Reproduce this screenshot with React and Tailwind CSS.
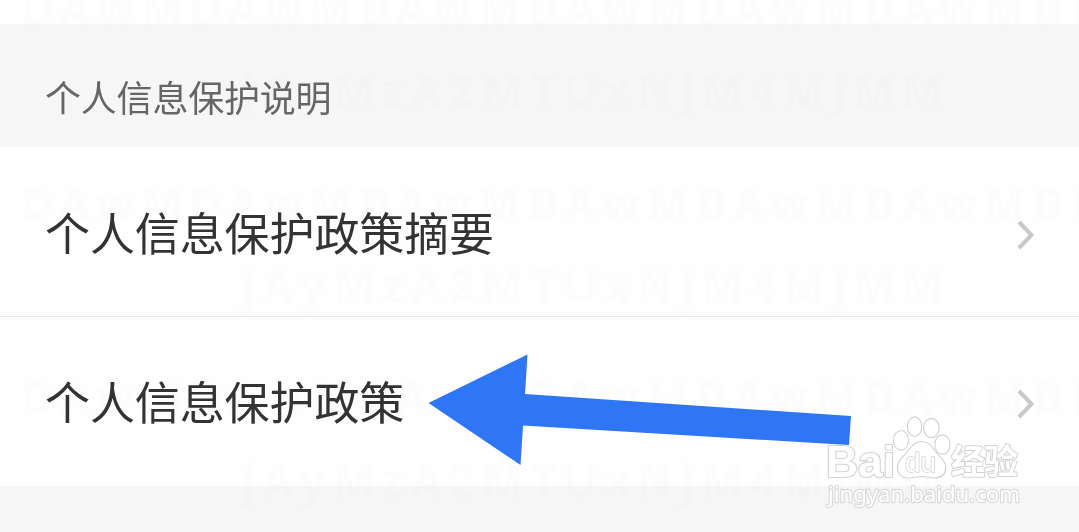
const rows = ["个人信息保护政策摘要", "个人信息保护政策"];

// baselines of the faint background codes
const longCodes = [25, 219.5, 413.5];
const shortCodes = [107, 302, 497];

function Chevron() {
  return (
    <svg width="20" height="32" viewBox="0 0 20 32" fill="none" className="mt-1.5 shrink-0">
      <path d="M3 3 L15.5 16 L3 29" stroke="#c9c9c9" strokeWidth="4" />
    </svg>
  );
}

function Row({ title }) {
  return (
    <button className="flex w-full h-[169px] last:h-[170px] items-center justify-between border-t border-[#e9e9e9] first:border-t-0 bg-[#fefefe] pl-[45px] pr-[43px] last:pb-0.5 text-left">
      <span className="text-[45px] leading-none tracking-[-0.1px] text-[#333333]">{title}</span>
      <Chevron />
    </button>
  );
}

function BackgroundCodes() {
  return (
    <svg
      className="pointer-events-none absolute inset-0 mix-blend-multiply"
      width="1079"
      height="532"
      viewBox="0 0 1079 532"
      fill="#fdfdfd"
      fontFamily='"Noto Sans", sans-serif'
      fontWeight="700"
      fontSize="44"
    >
      {longCodes.map((y) => (
        <text key={y} x="21" y={y} textLength="1092">DAwMDAwMDAwMDAwMDAwMDAwMDM</text>
      ))}
      {shortCodes.map((y) => (
        <text key={y} x="242" y={y} textLength="701">jAyMzA2MTUxNjM4MjMM</text>
      ))}
    </svg>
  );
}

function Arrow() {
  return (
    <path d="M428.5 403 L527.5 354.5 L525 394 L851 416 L849 445 L523 425.5 L520.5 465 Z" fill="#2f76f6" />
  );
}

function BaiduLogo() {
  return (
    <g fill="#fff" stroke="#d2d2d2" strokeWidth="1.1" strokeLinejoin="round">
      <text x="826" y="477" fontFamily='"Liberation Sans", sans-serif' fontWeight="700" fontSize="44" textLength="69" lengthAdjust="spacingAndGlyphs" strokeWidth="2.2" paintOrder="stroke">Bai</text>
      <ellipse cx="901" cy="440.3" rx="7.6" ry="9.8" />
      <ellipse cx="914.6" cy="426.7" rx="7.2" ry="9.8" />
      <ellipse cx="931.4" cy="428" rx="7.8" ry="9.6" />
      <ellipse cx="942.4" cy="444.5" rx="7.6" ry="9.6" />
      <path d="M921.7 441.5 C913 441.5 910 449 904.5 455 C899 460 897 463.5 897.4 468 C898 475 903 478.5 909 478 C914 477.5 917 476.5 922 476.5 C927 476.5 930 478.3 935 478 C942 477.5 946 473.5 945.7 467 C945.5 461 941 458 937 453.5 C932 447.5 930 441.5 921.7 441.5 Z" />
      <text x="905" y="472" fontFamily='"Liberation Sans", sans-serif' fontSize="27" textLength="31" lengthAdjust="spacingAndGlyphs" strokeWidth="1.6" paintOrder="stroke">du</text>
      <text x="951" y="474" fontFamily='"Noto Sans CJK SC", sans-serif' fontWeight="700" fontSize="34" textLength="67" strokeWidth="2" paintOrder="stroke">经验</text>
      <text x="828" y="502" fontFamily='"Noto Sans", sans-serif' fontSize="22.5" textLength="192" lengthAdjust="spacingAndGlyphs" stroke="#dadada" strokeWidth="2.4" paintOrder="stroke">jingyan.baidu.com</text>
    </g>
  );
}

export default function App() {
  return (
    <div className="relative flex h-[532px] w-[1079px] flex-col overflow-hidden bg-[#f6f6f6] font-['Noto_Sans_CJK_SC',sans-serif]">
      <div className="h-6 bg-[#fefefe]" />

      {/* Section title */}
      <div className="flex h-[123px] items-center pl-[45px] pt-5">
        <h2 className="text-[36px] leading-none tracking-[-0.2px] text-[#666666]">个人信息保护说明</h2>
      </div>

      <div>
        {rows.map((title) => (
          <Row key={title} title={title} />
        ))}
      </div>

      <BackgroundCodes />

      {/* Arrow and logo over the list */}
      <svg className="pointer-events-none absolute inset-0" width="1079" height="532" viewBox="0 0 1079 532">
        <Arrow />
        <BaiduLogo />
      </svg>
    </div>
  );
}
